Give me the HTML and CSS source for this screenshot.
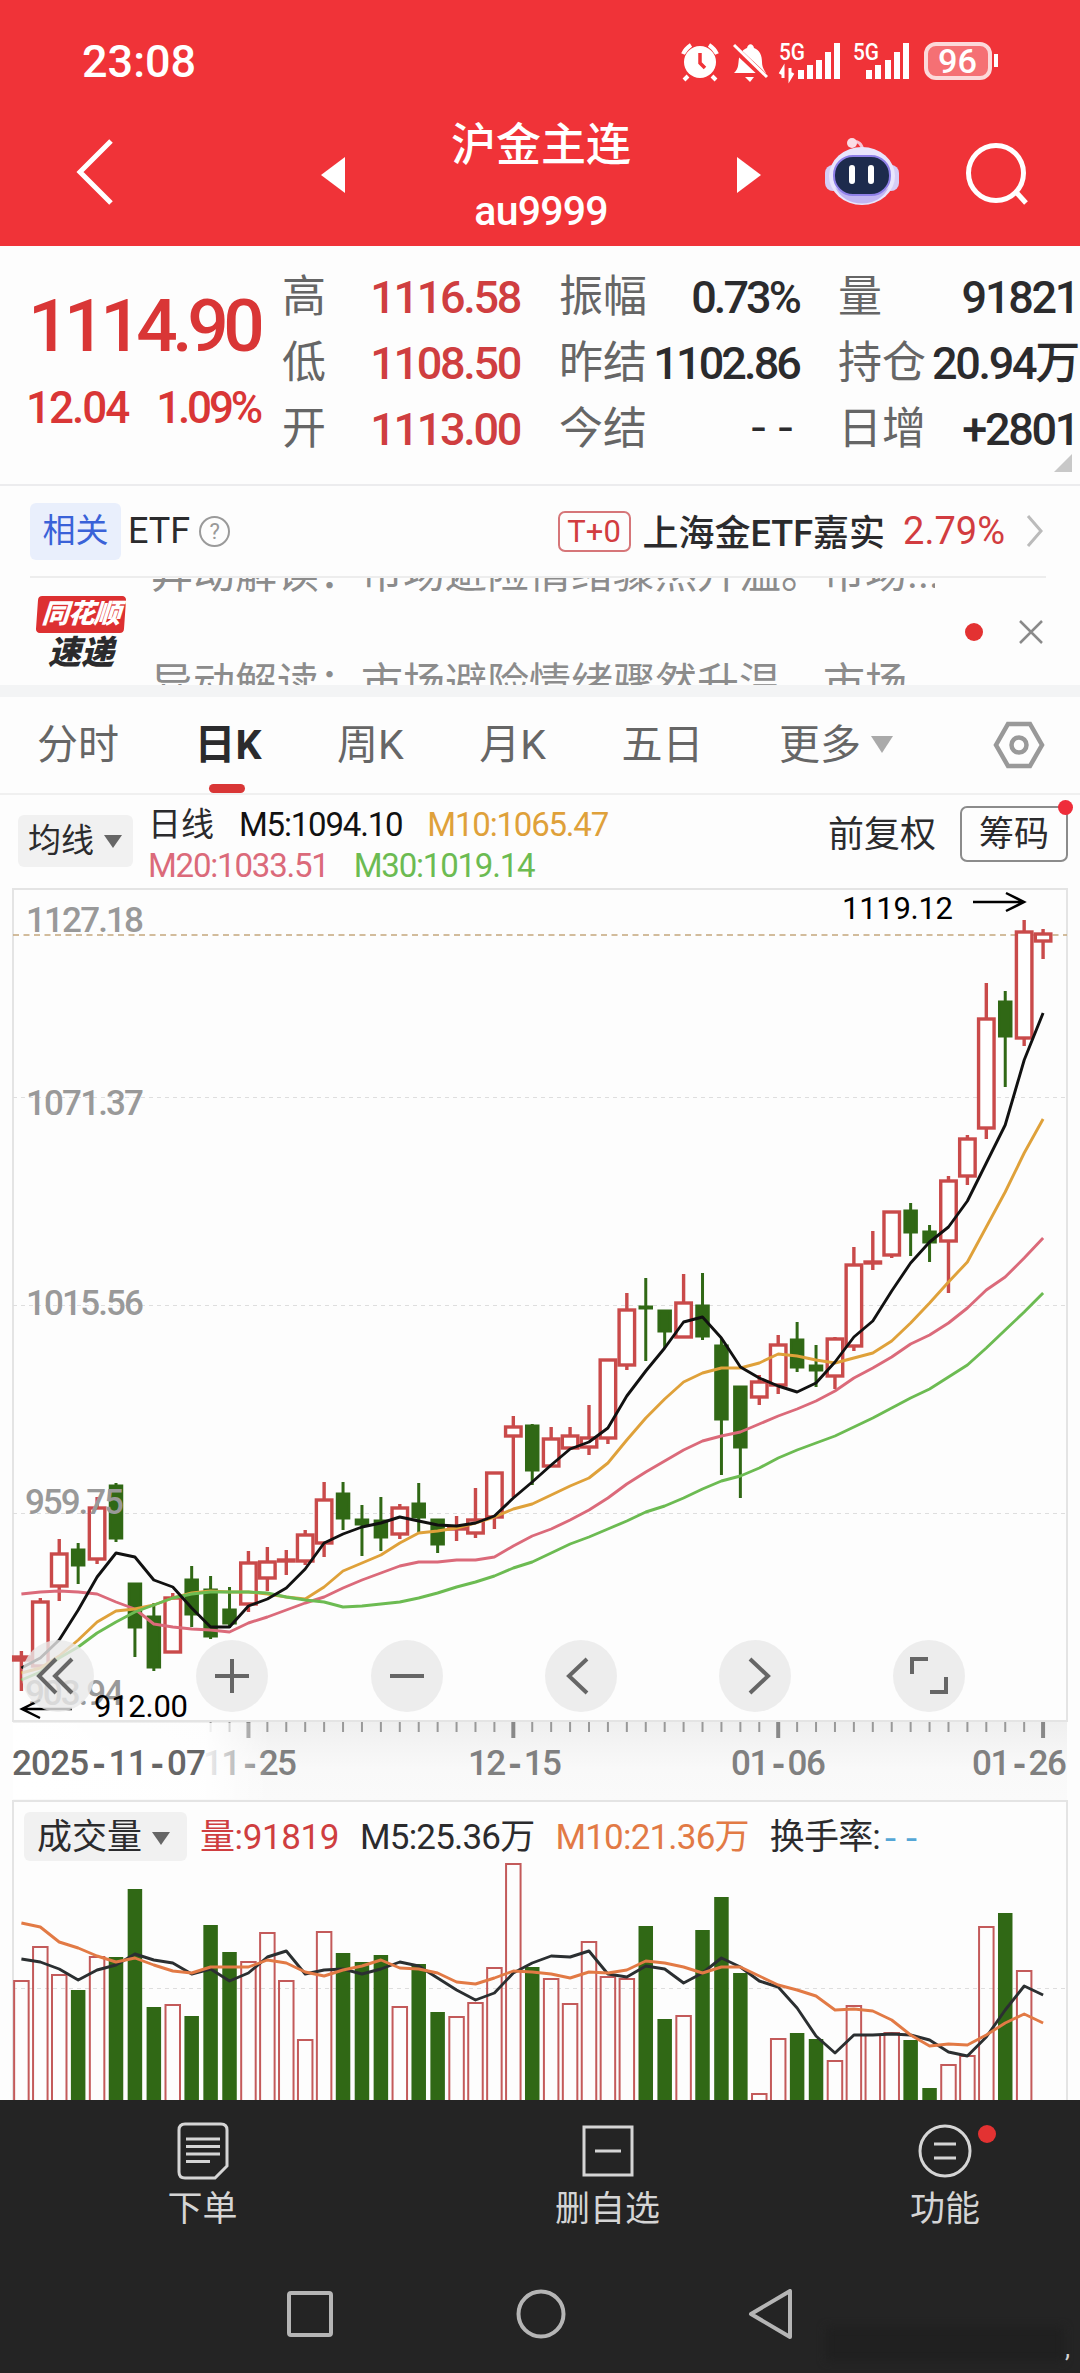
FILE: index.html
```html
<!DOCTYPE html>
<html lang="zh-CN">
<head>
  <meta charset="UTF-8" />
  <meta name="viewport" content="width=device-width, initial-scale=1.0"/>
  <title>沪金主连 au9999</title>
  <link rel="stylesheet" href="styles.css">
</head>
<body>
  <header>
    <div class="status">
      <span class="time">23:08</span>
      <svg class="status-icons" width="322" height="50" viewBox="680 36 322 50">
        <g fill="#fff" stroke="#fff">
          <circle cx="700" cy="62" r="16" stroke="none"/>
          <path d="M683 54a22 22 0 0 1 8-9M717 54a22 22 0 0 0-8-9M688 76l-4 4M712 76l4 4" stroke-width="4" fill="none"/>
          <path d="M700 53v10l5 5" stroke="#f03338" stroke-width="3.5" fill="none"/>
          <path d="M734 73c5-5 4-9 5-15 1-6 5-9 8-10 1-5 6-5 7 0 6 2 8 8 8 14 0 5 2 8 4 11z" stroke="none"/>
          <path d="M745 77h9l-4 5z" stroke="none"/>
          <path d="M733 47l33 31" stroke="#f03338" stroke-width="7"/>
          <path d="M734 45l33 32" stroke-width="3"/>
          <path d="M801 79V70M810 79V65M819 79V60M828 79V52M837 79V43" stroke-width="6"/>
          <path d="M783 78V69l-3 5M790 68v10l3-5" stroke-width="3" fill="none"/>
          <path d="M869 79V70M878 79V65M888 79V60M897 79V52M906 79V43" stroke-width="6"/>
          <rect x="926" y="44" width="64" height="34" rx="10" stroke-width="4" fill="#f57074" stroke="#fcd9da"/>
          <path d="M996 54v13" stroke-width="4"/>
        </g>
        <g class="status-text">
          <text x="779" y="60" font-size="24" textLength="26" lengthAdjust="spacingAndGlyphs">5G</text>
          <text x="853" y="60" font-size="24" textLength="26" lengthAdjust="spacingAndGlyphs">5G</text>
          <text x="938" y="73" font-size="34" textLength="39" lengthAdjust="spacingAndGlyphs">96</text>
        </g>
      </svg>
    </div>
    <nav class="title-bar">
      <svg class="back" width="40" height="68" viewBox="0 0 40 68"><path d="M36 3L5 34l31 31"/></svg>
      <svg class="prev" width="24" height="36" viewBox="0 0 24 36"><path d="M24 0v36L0 18z"/></svg>
      <div class="title">
        <h1>沪金主连</h1>
        <p>au9999</p>
      </div>
      <svg class="next" width="24" height="36" viewBox="0 0 24 36"><path d="M0 0v36l24-18z"/></svg>
      <svg class="robot" width="74" height="70" viewBox="0 0 74 70">
        <path d="M27 5c6-2 10 2 11 9" fill="none" stroke="#f7c3d2" stroke-width="3"/>
        <circle cx="27" cy="6" r="5" fill="#fbdce5"/>
        <rect x="0" y="28" width="16" height="26" rx="8" fill="#d5cdf6"/>
        <rect x="58" y="28" width="16" height="26" rx="8" fill="#d5cdf6"/>
        <ellipse cx="37" cy="39" rx="33" ry="29" fill="#e9e5fc"/>
        <path d="M10 50c10 22 44 22 54 0-8 10-46 10-54 0z" fill="#c1b5f2"/>
        <rect x="9" y="19" width="56" height="39" rx="19" fill="#1d2b4d" stroke="#8f80e8" stroke-width="2"/>
        <path d="M27 31v13M46 31v13" stroke="#fff" stroke-width="6" stroke-linecap="round"/>
      </svg>
      <svg class="search" width="64" height="64" viewBox="0 0 64 64"><circle cx="30" cy="30" r="27.5"/><path d="M50 49l10 11"/></svg>
    </nav>
  </header>

  <section class="quote">
    <div class="price">
      <strong>1114.90</strong>
      <p><span>12.04</span><span>1.09%</span></p>
    </div>
    <dl class="col-a red">
      <dt>高</dt><dd>1116.58</dd>
      <dt>低</dt><dd>1108.50</dd>
      <dt>开</dt><dd>1113.00</dd>
    </dl>
    <dl class="col-b">
      <dt>振幅</dt><dd>0.73%</dd>
      <dt>昨结</dt><dd>1102.86</dd>
      <dt>今结</dt><dd class="none">--</dd>
    </dl>
    <dl class="col-c">
      <dt>量</dt><dd>91821</dd>
      <dt>持仓</dt><dd>20.94万</dd>
      <dt>日增</dt><dd>+2801</dd>
    </dl>
    <i class="corner"></i>
  </section>

  <section class="etf">
    <span class="tag">相关</span>
    <span class="etf-label">ETF</span>
    <span class="help">?</span>
    <span class="t0">T+0</span>
    <span class="etf-name">上海金ETF嘉实</span>
    <span class="etf-rate">2.79%</span>
    <svg width="18" height="34" viewBox="0 0 18 34"><path d="M2 2l13 15L2 32"/></svg>
  </section>

  <section class="news">
    <div class="news-logo">
      <b>同花顺</b>
      <span>速递</span>
    </div>
    <div class="news-roll">
      <p>异动解读：市场避险情绪骤然升温。市场...</p>
      <p>异动解读：市场避险情绪骤然升温。市场...</p>
    </div>
    <i class="dot"></i>
    <svg width="24" height="24" viewBox="0 0 24 24"><path d="M1 1l22 22M23 1L1 23"/></svg>
  </section>

  <div class="tabs">
    <span>分时</span>
    <span class="active">日K</span>
    <span>周K</span>
    <span>月K</span>
    <span>五日</span>
    <span class="more">更多</span>
    <svg width="52" height="48" viewBox="0 0 52 48"><path d="M15 3h22l12 21-12 21H15L3 24z"/><circle cx="26" cy="24" r="7.5"/></svg>
  </div>

  <div class="legend">
    <span class="pick">均线</span>
    <div class="ma">
      <p><span class="cjk">日线</span><span class="m5">M5:1094.10</span><span class="m10">M10:1065.47</span></p>
      <p><span class="m20">M20:1033.51</span><span class="m30">M30:1019.14</span></p>
    </div>
    <span class="fuquan">前复权</span>
    <span class="chips">筹码<i class="dot"></i></span>
  </div>

  <div class="kline">
    <svg id="kline" width="1080" height="912" viewBox="0 888 1080 912">
      <defs>
        <linearGradient id="axisBg" x1="0" y1="0" x2="0" y2="1">
          <stop offset="0" stop-color="#efefef"/>
          <stop offset="0.6" stop-color="#f9f9f9"/>
          <stop offset="1" stop-color="#fafafa"/>
        </linearGradient>
        <linearGradient id="axisFade" x1="0" y1="0" x2="1" y2="0">
          <stop offset="0" stop-color="#fff"/>
          <stop offset="0.75" stop-color="#fff" stop-opacity="0.9"/>
          <stop offset="1" stop-color="#fff" stop-opacity="0"/>
        </linearGradient>
      </defs>
    </svg>
    <div class="tools">
      <button><svg viewBox="0 0 72 72"><path d="M34 19L17 36l17 17M50 19L33 36l17 17"/></svg></button>
      <button><svg viewBox="0 0 72 72"><path d="M19 36h34M36 19v34"/></svg></button>
      <button><svg viewBox="0 0 72 72"><path d="M19 36h34"/></svg></button>
      <button><svg viewBox="0 0 72 72"><path d="M42 19L24 36l18 17"/></svg></button>
      <button><svg viewBox="0 0 72 72"><path d="M31 19l18 17-18 17"/></svg></button>
      <button><svg viewBox="0 0 72 72"><path d="M19 34V19h16M53 37v15H37"/></svg></button>
    </div>
  </div>

  <div class="volume">
    <div class="vol-legend">
      <span class="pick">成交量</span>
      <span class="v0">量:91819</span>
      <span class="v5">M5:25.36万</span>
      <span class="v10">M10:21.36万</span>
      <span class="v5">换手率:<em>--</em></span>
    </div>
    <svg id="volume" width="1080" height="300" viewBox="0 1800 1080 300"></svg>
  </div>

  <footer>
    <div class="actions">
      <div>
        <svg width="52" height="58" viewBox="0 0 52 58"><path d="M8 2h36q6 0 6 6v36L38 56H8q-6 0-6-6V8q0-6 6-6z"/><path d="M9 17h34M9 24.500h34M9 32h34M9 39.500h24"/></svg>
        <span>下单</span>
      </div>
      <div>
        <svg width="52" height="58" viewBox="0 0 52 58"><path d="M2 5h48v48H2zM13 29h26"/></svg>
        <span>删自选</span>
      </div>
      <div class="func">
        <svg width="56" height="58" viewBox="0 0 56 58"><circle cx="28" cy="29" r="25"/><path d="M17 22h22M17 36h22"/></svg>
        <i class="dot"></i>
        <span>功能</span>
      </div>
    </div>
    <div class="sysnav">
      <svg width="48" height="50" viewBox="0 0 48 50"><rect x="3" y="4" width="42" height="42" rx="2"/></svg>
      <svg width="50" height="50" viewBox="0 0 50 50"><circle cx="25" cy="25" r="22.500"/></svg>
      <svg width="46" height="50" viewBox="0 0 46 50"><path d="M42 2v46L3 25z"/></svg>
    </div>
    <i class="smear"></i>
    <span class="mark">,</span>
  </footer>

  <script src="chart.js"></script>
</body>
</html>
```
FILE: styles.css
```css
* {
  box-sizing: border-box;
}

body {
  margin: 0;
  width: 1080px;
  height: 2373px;
  overflow: hidden;
  font-family: Roboto, "Noto Sans CJK SC", sans-serif;
  background: #fdfdfd;
  color: #2b2b2d;
}

p, h1, dl, dd {
  margin: 0;
}

svg {
  display: block;
  flex: none;
}

.dot {
  display: block;
  width: 18px;
  height: 18px;
  border-radius: 50%;
  background: #e33232;
}

/* header */
header {
  height: 246px;
  background: #f03338;
  color: #fff;
}

.status {
  display: flex;
  justify-content: space-between;
  height: 120px;
  padding: 36px 78px 0 82px;
}

.time {
  font-size: 45px;
  font-weight: 500;
  line-height: 52px;
}

.status-text {
  fill: #fff;
  font-weight: 500;
}

.title-bar {
  display: flex;
  align-items: center;
  height: 110px;
  padding-left: 75px;
}

.title-bar svg {
  fill: #fff;
}

.title-bar .back,
.title-bar .search {
  fill: none;
  stroke: #fff;
  stroke-width: 5;
}

.back {
  margin-bottom: 6px;
}

.prev {
  margin-left: 206px;
}

.title {
  width: 340px;
  margin: 6px 26px 0;
  text-align: center;
}

.title h1 {
  font-size: 45px;
  font-weight: 500;
  line-height: 66px;
}

.title p {
  font-size: 41px;
  font-weight: 500;
  line-height: 64px;
  letter-spacing: -0.8px;
}

.robot {
  margin-left: 64px;
  margin-bottom: 6px;
}

.search {
  margin-left: 67px;
}

/* quote */
.quote {
  position: relative;
  display: flex;
  height: 240px;
  padding-top: 18px;
  border-bottom: 2px solid #ececee;
  white-space: nowrap;
}

.price {
  width: 282px;
  padding: 18px 0 0 28px;
  color: #d93636;
}

.price strong {
  display: block;
  font-size: 73px;
  font-weight: 500;
  line-height: 88px;
  letter-spacing: -5.4px;
}

.price p {
  display: flex;
  gap: 28px;
  margin-left: -2px;
  font-size: 44px;
  font-weight: 500;
  line-height: 76px;
  letter-spacing: -2px;
}

.price p span + span {
  letter-spacing: -3.2px;
}

.quote dl {
  display: grid;
  grid-template-columns: auto 1fr;
  grid-auto-rows: 66px;
  line-height: 66px;
}

.quote dt {
  font-size: 44px;
  color: #666;
}

.quote dd {
  padding-top: 1px;
  font-size: 45px;
  font-weight: 500;
  text-align: right;
  letter-spacing: -2.3px;
}

.quote .red dd {
  color: #cf3e40;
}

.quote .col-b dd {
  letter-spacing: -2.9px;
}

.quote dd.none,
.vol-legend em {
  font-family: "Liberation Mono", monospace;
}

.quote .col-b dd.none {
  letter-spacing: 0;
}

.col-a {
  width: 238px;
  margin-right: 39px;
}

.col-b {
  width: 240px;
  margin-right: 39px;
}

.col-c {
  width: 240px;
}

.corner {
  position: absolute;
  right: 8px;
  bottom: 12px;
  border-left: 18px solid transparent;
  border-bottom: 18px solid #c8c8c8;
}

/* related etf */
.etf {
  display: flex;
  align-items: center;
  height: 92px;
  margin: 0 34px 0 30px;
  border-bottom: 2px solid #ededed;
  font-size: 36px;
}

.tag {
  width: 91px;
  height: 57px;
  border-radius: 6px;
  background: #e9effc;
  color: #3a62d8;
  font-size: 33px;
  line-height: 56px;
  text-align: center;
}

.etf-label {
  margin-left: 7px;
}

.help {
  width: 31px;
  height: 31px;
  margin-left: 9px;
  border: 2px solid #9a9a9a;
  border-radius: 50%;
  color: #999;
  font-size: 22px;
  line-height: 28px;
  text-align: center;
}

.t0 {
  width: 73px;
  height: 41px;
  margin-left: auto;
  border: 2px solid #d67679;
  border-radius: 7px;
  color: #d23c40;
  font-size: 31px;
  line-height: 38px;
  text-align: center;
}

.etf-name {
  margin-left: 12px;
  margin-bottom: 3px;
  font-weight: 500;
}

.etf-rate {
  margin-left: 18px;
  color: #d23c40;
  font-size: 38px;
}

.etf svg {
  margin: 0 2px 0 21px;
  fill: none;
  stroke: #bbb;
  stroke-width: 3;
}

/* news ticker */
.news {
  display: flex;
  align-items: center;
  height: 119px;
  padding: 0 37px;
  border-bottom: 12px solid #f3f4f5;
}

.news-logo {
  width: 88px;
  margin-top: 6px;
  font-style: italic;
  font-weight: 900;
  text-align: center;
}

.news-logo b {
  display: block;
  height: 37px;
  border-radius: 4px;
  background: #dd3031;
  color: #fff;
  font-size: 27px;
  line-height: 36px;
  letter-spacing: -1px;
  transform: skewX(-4deg);
}

.news-logo span {
  display: block;
  font-size: 33px;
  line-height: 40px;
}

.news-roll {
  width: 785px;
  height: 107px;
  margin-left: 26px;
  overflow: hidden;
  color: #8c8c8c;
  font-size: 42px;
  white-space: nowrap;
}

.news-roll p {
  height: 110px;
  line-height: 110px;
  transform: translateY(-59px);
}

.news .dot {
  margin-left: 30px;
}

.news svg {
  margin-left: 36px;
  stroke: #8a8a8a;
  stroke-width: 2.500;
}

/* period tabs */
.tabs {
  display: flex;
  align-items: center;
  gap: 75.500px;
  height: 98px;
  padding-left: 37px;
  border-bottom: 2px solid #f0f0f0;
  color: #666;
  font-size: 41px;
  line-height: 98px;
}

.tabs .active {
  position: relative;
  color: #2b2b2d;
  font-weight: 700;
}

.tabs .active::after {
  content: "";
  position: absolute;
  left: 14px;
  bottom: 1px;
  width: 36px;
  height: 9px;
  border-radius: 5px;
  background: #d93636;
}

.more::after {
  content: "";
  display: inline-block;
  margin: 0 0 6px 10px;
  border: 11px solid transparent;
  border-top: 17px solid #aaa;
  border-bottom: 0;
}

.tabs svg {
  margin-left: 24px;
  fill: none;
  stroke: #999;
  stroke-width: 4.500;
}

/* moving average legend */
.legend {
  display: flex;
  height: 93px;
  padding: 11px 12px 0 18px;
  white-space: nowrap;
}

.pick {
  border-radius: 6px;
  background: #f1f1f1;
}

.pick::after {
  content: "";
  display: inline-block;
  margin: 0 0 4px 10px;
  border: 9px solid transparent;
  border-top: 13px solid #666;
  border-bottom: 0;
}

.legend .pick {
  width: 115px;
  height: 52px;
  margin-top: 9px;
  padding-left: 10px;
  font-size: 33px;
  line-height: 52px;
}

.ma {
  width: 680px;
  margin-left: 15px;
  font-size: 33px;
  letter-spacing: -1.2px;
}

.ma p {
  display: flex;
  gap: 25px;
  height: 41px;
  line-height: 38px;
}

.ma .cjk {
  letter-spacing: 0;
}

.m5 {
  color: #111;
}

.m10 {
  color: #dfa13a;
}

.m20 {
  color: #db6a7a;
}

.m30 {
  color: #6cbb52;
}

.fuquan {
  width: 132px;
  font-size: 36px;
  line-height: 58px;
}

.chips {
  position: relative;
  width: 108px;
  height: 56px;
  border: 2px solid #8b8b8b;
  border-radius: 7px;
  font-size: 35px;
  line-height: 54px;
  text-align: center;
}

.chips .dot {
  position: absolute;
  top: -8px;
  right: -7px;
  width: 15px;
  height: 15px;
  background: #ef2d3a;
}

/* charts */
.kline {
  position: relative;
}

.tools {
  position: absolute;
  left: 22px;
  top: 752px;
  display: flex;
  gap: 102.300px;
}

.tools button {
  width: 72px;
  height: 72px;
  padding: 0;
  border: 0;
  border-radius: 50%;
  background: rgba(232, 232, 232, 0.8);
}

.tools svg {
  fill: none;
  stroke: #666;
  stroke-width: 4;
}

.volume {
  position: relative;
}

.vol-legend {
  position: absolute;
  left: 24px;
  top: 12px;
  display: flex;
  font-size: 35px;
  line-height: 52px;
  white-space: nowrap;
}

.vol-legend .pick {
  width: 163px;
  height: 49px;
  padding-left: 13px;
}

.v0 {
  margin-left: 13px;
  color: #cf3e40;
  letter-spacing: -0.4px;
}

.v5, .v10 {
  margin-left: 21px;
  letter-spacing: -0.8px;
}

.v10 {
  color: #e27a45;
}

.vol-legend em {
  color: #55a6d6;
  font-style: normal;
  letter-spacing: 0;
}

/* bottom bars */
footer {
  position: relative;
  height: 273px;
  background: #242424;
  color: #d5d5d5;
}

.actions {
  display: grid;
  grid-template-columns: 3fr 3fr 2fr;
  height: 174px;
  padding-top: 22px;
}

.actions div {
  position: relative;
  display: flex;
  flex-direction: column;
  align-items: center;
  font-size: 35px;
  line-height: 59px;
}

footer svg {
  fill: none;
  stroke: #d5d5d5;
  stroke-width: 3;
}

.func .dot {
  position: absolute;
  left: 168px;
  top: 3px;
}

.sysnav {
  display: flex;
  justify-content: center;
  gap: 182px;
  padding: 15px 0 0 0;
}

.sysnav svg {
  stroke: #b5b5b5;
  stroke-width: 4;
  stroke-linejoin: round;
}

.smear {
  position: absolute;
  left: 826px;
  bottom: 12px;
  width: 238px;
  height: 34px;
  background: #202020;
  filter: blur(4px);
}

.mark {
  position: absolute;
  right: 10px;
  bottom: 10px;
  font-size: 26px;
}

/* chart svg */
.frame {
  fill: none;
  stroke: #e4e4e4;
  stroke-width: 2;
}

.grid {
  stroke: #dedede;
  stroke-width: 1;
  stroke-dasharray: 4 4;
}

.now {
  stroke: #c4a67c;
  stroke-width: 1.500;
  stroke-dasharray: 6 4.500;
}

.up {
  fill: #fff;
  stroke: #c94a4a;
  stroke-width: 3.400;
}

.up.bar {
  fill: none;
  stroke: #c35a5a;
  stroke-width: 2;
}

.down {
  fill: #306815;
  stroke: #306815;
  stroke-width: 3;
}

.down.bar {
  stroke: none;
}

.line {
  fill: none;
  stroke-width: 2.900;
  stroke-linejoin: round;
}

.y-label {
  fill: #999;
  font-size: 35px;
  font-weight: 500;
}

.x-label {
  fill: #808080;
  font-size: 35px;
  font-weight: 500;
}

.dash {
  font-family: "Liberation Mono", monospace;
  font-weight: 700;
}

.x-label.start {
  fill: #666;
}

.peak {
  fill: #000;
  font-size: 31px;
}

.arrow {
  fill: none;
  stroke: #000;
  stroke-width: 2.500;
}

.tick {
  stroke: #999;
  stroke-width: 2;
}

.tick.big {
  stroke: #888;
  stroke-width: 4;
}
```
FILE: chart.js
```js
const STEP = 18.92;
const X0 = 21.4;

// direction, high, body top, body bottom, low
const candles = [
  ["u",1651,1657,1660,1691],["u",1598,1602,1666,1666],["u",1539,1554,1586,1601],["d",1543,1550,1565,1584],
  ["u",1497,1508,1559,1564],["d",1483,1486,1538,1542],["d",1584,1584,1627,1657],["d",1603,1617,1667,1671],
  ["u",1593,1598,1652,1652],["d",1566,1580,1614,1627],["d",1576,1590,1636,1639],["d",1587,1610,1623,1628],
  ["u",1551,1563,1604,1612],["u",1547,1562,1578,1591],["u",1550,1560,1561,1575],["u",1530,1535,1561,1565],
  ["u",1482,1500,1543,1557],["d",1482,1494,1518,1530],["d",1505,1520,1524,1556],["d",1497,1521,1537,1551],
  ["u",1504,1508,1534,1539],["d",1483,1504,1517,1532],["d",1519,1520,1544,1553],["u",1516,1528,1529,1541],
  ["u",1488,1520,1533,1538],["u",1472,1473,1517,1529],["u",1416,1427,1436,1497],["d",1424,1426,1470,1485],
  ["u",1427,1439,1466,1466],["u",1427,1436,1448,1448],["u",1405,1438,1447,1455],["u",1360,1360,1438,1444],
  ["u",1293,1310,1365,1370],["d",1278,1307,1308,1361],["d",1310,1311,1331,1348],["u",1274,1303,1337,1338],
  ["d",1273,1306,1336,1340],["d",1338,1346,1419,1475],["d",1387,1387,1447,1498],["u",1375,1382,1397,1405],
  ["u",1335,1345,1385,1394],["d",1322,1340,1367,1372],["d",1345,1366,1370,1387],["u",1337,1339,1376,1389],
  ["u",1247,1265,1346,1351],["u",1231,1262,1263,1270],["u",1211,1212,1255,1258],["d",1203,1211,1232,1256],
  ["d",1225,1232,1242,1262],["u",1176,1181,1241,1293],["u",1135,1139,1176,1185],["u",983,1019,1128,1139],
  ["d",991,1002,1036,1087],["u",920,932,1038,1046],["u",929,934,941,959]
];

const ma = {
  "#db6a7a": [1594,1592,1591,1592,1594,1602,1609,1624,1627,1629,1630,1632,1623,1617,1610,1603,1597,1588,1580,1573,1566,1562,1562,1560,1560,1557,1546,1536,1529,1520,1510,1498,1484,1472,1461,1450,1441,1436,1432,1424,1416,1409,1401,1391,1378,1368,1357,1344,1335,1323,1308,1290,1277,1258,1238],
  "#dfa13a": [1673,1668,1656,1640,1622,1611,1609,1605,1598,1593,1591,1592,1592,1594,1597,1599,1587,1571,1563,1555,1543,1533,1531,1528,1523,1517,1509,1504,1495,1486,1478,1463,1440,1418,1399,1382,1373,1368,1368,1363,1354,1356,1360,1363,1358,1353,1341,1323,1303,1282,1262,1227,1192,1153,1119],
  "#6cbb52": [1680,1672,1658,1647,1633,1622,1612,1605,1598,1594,1592,1592,1592,1593,1597,1600,1602,1607,1606,1604,1602,1598,1593,1587,1582,1576,1568,1562,1553,1544,1537,1529,1521,1512,1506,1498,1489,1481,1476,1468,1458,1450,1443,1436,1427,1418,1408,1398,1389,1377,1365,1348,1330,1312,1293],
  "#111": [1668,1658,1640,1610,1577,1553,1557,1580,1587,1608,1627,1627,1606,1599,1588,1569,1543,1534,1527,1523,1517,1521,1525,1526,1523,1516,1498,1482,1465,1449,1442,1428,1396,1371,1348,1322,1317,1338,1367,1378,1386,1392,1383,1362,1337,1321,1291,1263,1242,1227,1201,1163,1125,1060,1013]
};

const volumes = [1981,1947,1975,1990,1957,1957,1889,2007,2005,2016,1925,1952,1962,1933,1981,2040,1932,1953,1962,1955,2007,1964,2012,2017,2003,1968,1864,1967,1979,2004,1942,1977,1979,1926,2019,2016,1930,1897,1973,2094,2039,2033,2039,2061,2006,2035,2033,2040,2088,2065,2056,1927,1913,1971];

const volMa = {
  "#2b2f31": [1959,1962,1969,1980,1970,1965,1954,1960,1963,1974,1969,1981,1973,1957,1951,1974,1970,1969,1974,1969,1962,1966,1978,1990,2000,1993,1973,1963,1956,1957,1951,1974,1977,1966,1969,1983,1973,1958,1967,1981,1987,2008,2036,2053,2035,2035,2034,2035,2040,2052,2056,2037,2010,1986,1995],
  "#e27a45": [1923,1927,1942,1948,1956,1962,1958,1965,1971,1973,1967,1967,1967,1960,1963,1972,1976,1970,1966,1960,1968,1969,1973,1982,1984,1978,1971,1972,1974,1978,1972,1973,1970,1961,1963,1967,1973,1967,1967,1976,1985,1990,1996,2010,2009,2011,2020,2035,2046,2044,2045,2035,2023,2014,2023]
};

const x = i => X0 + i * STEP;

function lines(set) {
  return Object.entries(set).map(([color, ys]) =>
    `<polyline class="line" stroke="${color}" points="${ys.map((y, i) => x(i).toFixed(1) + "," + y).join(" ")}"/>`
  ).join("");
}

function label(cls, left, base, width, text) {
  const body = text.replace(/-/g, '<tspan class="dash">-</tspan>');
  return `<text class="${cls}" x="${left}" y="${base}" textLength="${width}">${body}</text>`;
}

function hline(cls, y) {
  return `<line class="${cls}" x1="13" x2="1067" y1="${y}" y2="${y}"/>`;
}

function drawKline() {
  let s = '<rect x="13" y="1722" width="1054" height="78" fill="url(#axisBg)"/>';
  s += '<rect class="frame" x="13" y="889" width="1054" height="832"/>';
  s += [1097.5, 1305.5, 1513.5].map(y => hline("grid", y)).join("");
  s += hline("now", 935);

  candles.forEach(([dir, high, top, bottom, low], i) => {
    const cls = dir === "u" ? "up" : "down";
    const w = dir === "u" ? 15.5 : 11.5;
    s += `<path class="${cls}" d="M${x(i)} ${high}V${top}M${x(i)} ${bottom}V${low}"/>`;
    s += `<rect class="${cls}" x="${x(i) - w / 2}" y="${top}" width="${w}" height="${Math.max(bottom - top, 0.5)}"/>`;
  });
  s += lines(ma);

  s += label("y-label", 26, 932, 118, "1127.18");
  s += label("y-label", 26, 1115, 118, "1071.37");
  s += label("y-label", 26, 1315, 118, "1015.56");
  s += label("y-label", 25, 1514, 99, "959.75");
  s += label("y-label", 25, 1705, 99, "903.94");
  s += label("peak", 94, 1717, 94, "912.00");
  s += label("peak", 842, 919, 111, "1119.12");
  s += '<path class="arrow" d="M72 1709H22M40 1700L22 1709l18 9"/>';
  s += '<path class="arrow" d="M973 902h50M1006 893l18 9-18 9"/>';

  for (let i = 10; i < 55; i++) {
    const big = (i - 12) % 14 === 0;
    s += `<line class="tick${big ? " big" : ""}" x1="${x(i)}" x2="${x(i)}" y1="1722" y2="${big ? 1738 : 1732}"/>`;
  }
  s += label("x-label", 203, 1775, 94, "11-25");
  s += '<rect x="13" y="1723" width="257" height="76" fill="url(#axisFade)"/>';
  s += label("x-label start", 12, 1775, 194, "2025-11-07");
  s += label("x-label", 468, 1775, 94, "12-15");
  s += label("x-label", 731, 1775, 95, "01-06");
  s += label("x-label", 972, 1775, 95, "01-26");
  document.getElementById("kline").insertAdjacentHTML("beforeend", s);
}

function drawVolume() {
  let s = '<path class="frame" d="M13 2100V1801h1054v299"/>' + hline("grid", 1988.5);
  volumes.forEach((top, i) => {
    const up = candles[i][0] === "u";
    const w = 14.5;
    s += `<rect class="${up ? "up" : "down"} bar" x="${x(i) - w / 2}" y="${top}" width="${w}" height="${2104 - top}"/>`;
  });
  s += lines(volMa);
  document.getElementById("volume").innerHTML = s;
}

drawKline();
drawVolume();
```
